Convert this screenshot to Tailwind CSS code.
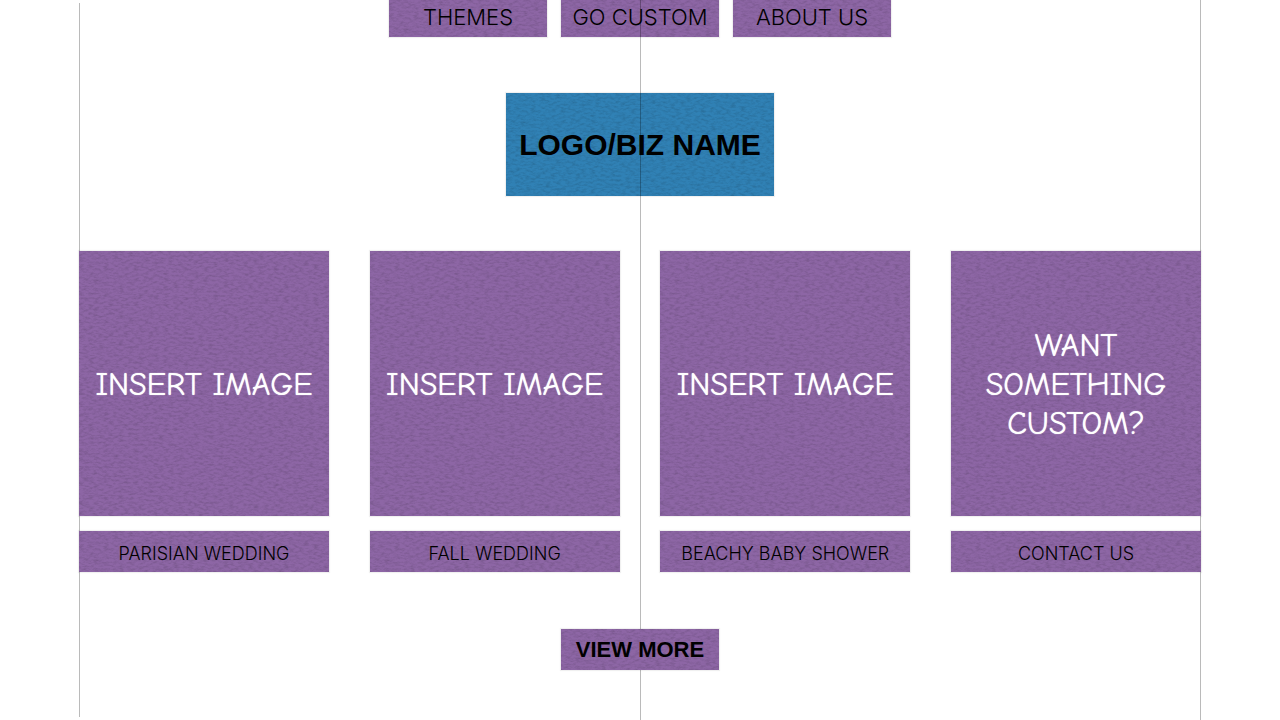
<!DOCTYPE html>
<html lang="en">
<head>
<meta charset="utf-8">
<meta name="viewport" content="width=device-width, initial-scale=1">
<title>Party themes</title>
<script src="https://cdn.jsdelivr.net/npm/@tailwindcss/browser@4"></script>
</head>
<body class="bg-white font-['Helvetica_Neue',Inter,'Liberation_Sans',sans-serif] text-black">
<!-- Shared paper grain -->
<svg class="absolute size-0" aria-hidden="true">
  <filter id="paper" x="0" y="0" width="100%" height="100%" color-interpolation-filters="sRGB">
    <feTurbulence type="fractalNoise" baseFrequency="0.2 0.45" numOctaves="3" seed="7"/>
    <feColorMatrix values="0 0 0 0 0  0 0 0 0 0  0 0 0 0 0  0.28 0 0 0 -0.11"/>
  </filter>
</svg>
<div class="relative min-h-screen">
  <!-- Guides at the page edges -->
  <div class="absolute top-[3px] bottom-[3px] left-[79px] w-px bg-[#bababa]"></div>
  <div class="absolute inset-y-0 right-[79px] w-px bg-[#bababa]"></div>

  <header class="flex flex-col items-center">
    <nav class="flex gap-3.5 text-[22px] leading-[35px] font-light" aria-label="Main">
      <a href="#themes" class="relative w-[158px] bg-[#8d66a5] pb-0.5 text-center shadow-[0_0_1px_1px_#0000000f]"><svg class="absolute inset-0 size-full" aria-hidden="true"><rect width="100%" height="100%" filter="url(#paper)"/></svg><span class="relative">THEMES</span></a>
      <a href="#custom" class="relative w-[158px] bg-[#8d66a5] pb-0.5 text-center shadow-[0_0_1px_1px_#0000000f]"><svg class="absolute inset-0 size-full" aria-hidden="true"><rect width="100%" height="100%" filter="url(#paper)"/></svg><span class="relative whitespace-nowrap">GO CUSTOM</span></a>
      <a href="#about" class="relative w-[158px] bg-[#8d66a5] pb-0.5 text-center shadow-[0_0_1px_1px_#0000000f]"><svg class="absolute inset-0 size-full" aria-hidden="true"><rect width="100%" height="100%" filter="url(#paper)"/></svg><span class="relative">ABOUT US</span></a>
    </nav>
    <h1 class="relative mt-14 w-[268px] bg-[#3081b5] py-8 text-center font-['Liberation_Sans',sans-serif] text-[30px] leading-[39px] font-bold whitespace-nowrap shadow-[0_0_1px_1px_#0000000f]"><svg class="absolute inset-0 size-full" aria-hidden="true"><rect width="100%" height="100%" filter="url(#paper)"/></svg><span class="relative">LOGO/BIZ NAME</span></h1>
  </header>

  <!-- Centre guide, over the header boxes and under the button -->
  <div class="absolute inset-y-0 left-1/2 w-px bg-black/27"></div>

  <main class="flex flex-col items-center px-[79px] pt-[55px] pb-[50px]">
    <ul class="flex w-full flex-wrap justify-between gap-y-8">
      <li class="flex w-[250px] flex-col gap-[15px]">
        <div class="relative flex min-h-[265px] items-center justify-center bg-[#8d66a5] pt-0.5 text-center font-['Comic_Sans_MS','Comic_Neue',Lato,sans-serif] text-[32px] leading-[39px] text-white shadow-[0_0_1px_1px_#0000000f] [text-shadow:0_0_1px_#fff]"><svg class="absolute inset-0 size-full" aria-hidden="true"><rect width="100%" height="100%" filter="url(#paper)"/></svg><span class="relative">INSERT IMAGE</span></div>
        <a href="#parisian" class="relative bg-[#8d66a5] pt-1.5 pb-0.5 text-center text-lg leading-[33px] font-light shadow-[0_0_1px_1px_#0000000f]"><svg class="absolute inset-0 size-full" aria-hidden="true"><rect width="100%" height="100%" filter="url(#paper)"/></svg><span class="relative">PARISIAN WEDDING</span></a>
      </li>
      <li class="flex w-[250px] flex-col gap-[15px]">
        <div class="relative flex min-h-[265px] items-center justify-center bg-[#8d66a5] pt-0.5 text-center font-['Comic_Sans_MS','Comic_Neue',Lato,sans-serif] text-[32px] leading-[39px] text-white shadow-[0_0_1px_1px_#0000000f] [text-shadow:0_0_1px_#fff]"><svg class="absolute inset-0 size-full" aria-hidden="true"><rect width="100%" height="100%" filter="url(#paper)"/></svg><span class="relative">INSERT IMAGE</span></div>
        <a href="#fall" class="relative bg-[#8d66a5] pt-1.5 pb-0.5 text-center text-lg leading-[33px] font-light shadow-[0_0_1px_1px_#0000000f]"><svg class="absolute inset-0 size-full" aria-hidden="true"><rect width="100%" height="100%" filter="url(#paper)"/></svg><span class="relative">FALL WEDDING</span></a>
      </li>
      <li class="flex w-[250px] flex-col gap-[15px]">
        <div class="relative flex min-h-[265px] items-center justify-center bg-[#8d66a5] pt-0.5 text-center font-['Comic_Sans_MS','Comic_Neue',Lato,sans-serif] text-[32px] leading-[39px] text-white shadow-[0_0_1px_1px_#0000000f] [text-shadow:0_0_1px_#fff]"><svg class="absolute inset-0 size-full" aria-hidden="true"><rect width="100%" height="100%" filter="url(#paper)"/></svg><span class="relative">INSERT IMAGE</span></div>
        <a href="#beachy" class="relative bg-[#8d66a5] pt-1.5 pb-0.5 text-center text-lg leading-[33px] font-light shadow-[0_0_1px_1px_#0000000f]"><svg class="absolute inset-0 size-full" aria-hidden="true"><rect width="100%" height="100%" filter="url(#paper)"/></svg><span class="relative">BEACHY BABY SHOWER</span></a>
      </li>
      <li class="flex w-[250px] flex-col gap-[15px]">
        <div class="relative flex min-h-[265px] items-center justify-center bg-[#8d66a5] px-6 pt-0.5 text-center font-['Comic_Sans_MS','Comic_Neue',Lato,sans-serif] text-[32px] leading-[39px] text-white shadow-[0_0_1px_1px_#0000000f] [text-shadow:0_0_1px_#fff]"><svg class="absolute inset-0 size-full" aria-hidden="true"><rect width="100%" height="100%" filter="url(#paper)"/></svg><span class="relative">WANT<br>SOMETHING<br>CUSTOM?</span></div>
        <a href="#contact" class="relative bg-[#8d66a5] pt-1.5 pb-0.5 text-center text-lg leading-[33px] font-light shadow-[0_0_1px_1px_#0000000f]"><svg class="absolute inset-0 size-full" aria-hidden="true"><rect width="100%" height="100%" filter="url(#paper)"/></svg><span class="relative">CONTACT US</span></a>
      </li>
    </ul>
    <button type="button" class="relative mt-[57px] w-[158px] bg-[#8d66a5] py-1 text-center font-['Liberation_Sans',sans-serif] text-[22px] leading-[33px] font-bold shadow-[0_0_1px_1px_#0000000f]"><svg class="absolute inset-0 size-full" aria-hidden="true"><rect width="100%" height="100%" filter="url(#paper)"/></svg><span class="relative">VIEW MORE</span></button>
  </main>
</div>
</body>
</html>
